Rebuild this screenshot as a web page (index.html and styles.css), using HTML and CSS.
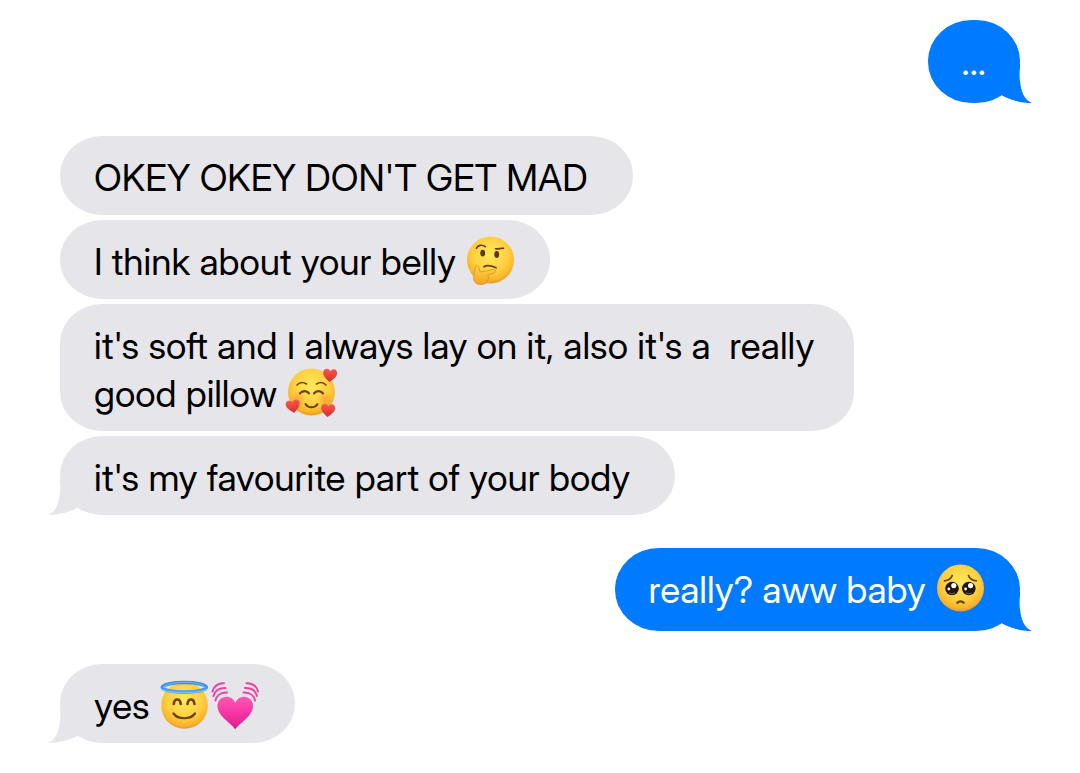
FILE: index.html
```html
<!DOCTYPE html>
<html lang="en">

<head>
    <meta charset="UTF-8">
    <meta name="viewport" content="width=device-width, initial-scale=1.0">
    <title>Messages</title>
    <link rel="stylesheet" href="styles.css">
</head>

<body>

    <!-- shared shapes -->
    <svg class="defs" aria-hidden="true">
        <defs>
            <radialGradient id="face" cx="50%" cy="38%" r="62%">
                <stop offset="0" stop-color="#ffe95e"></stop>
                <stop offset="0.6" stop-color="#fed040"></stop>
                <stop offset="0.88" stop-color="#f9b42c"></stop>
                <stop offset="1" stop-color="#e99a20"></stop>
            </radialGradient>
            <linearGradient id="hand" x1="0" y1="0" x2="0" y2="1">
                <stop offset="0" stop-color="#ffd84a"></stop>
                <stop offset="1" stop-color="#f5a11f"></stop>
            </linearGradient>
            <linearGradient id="halo" x1="0" y1="0" x2="0" y2="1">
                <stop offset="0" stop-color="#3e8be0"></stop>
                <stop offset="1" stop-color="#4aa5f4"></stop>
            </linearGradient>
            <radialGradient id="blush">
                <stop offset="0" stop-color="#f6702e" stop-opacity="0.4"></stop>
                <stop offset="1" stop-color="#f6702e" stop-opacity="0"></stop>
            </radialGradient>
            <linearGradient id="pink" x1="0" y1="0" x2="0" y2="1">
                <stop offset="0" stop-color="#ff58b4"></stop>
                <stop offset="0.5" stop-color="#f535a4"></stop>
                <stop offset="1" stop-color="#e01b8c"></stop>
            </linearGradient>
            <linearGradient id="red" x1="0" y1="0" x2="0" y2="1">
                <stop offset="0" stop-color="#f75a4d"></stop>
                <stop offset="1" stop-color="#d92b2f"></stop>
            </linearGradient>
            <path id="small-heart" d="M0 7C-3 4.500 -7 1.500 -7 -2.200C-7 -4.600 -5.400 -6 -3.500 -6C-1.800 -6 -.6 -5 0 -3.600C.6 -5 1.800 -6 3.500 -6C5.400 -6 7 -4.600 7 -2.200C7 1.500 3 4.500 0 7Z" fill="url(#red)"></path>
            <path id="tail" d="M12 1C12 8 13 12 12 18C11 28 8 37 0 40C10 40 22 37 29 33L44 20L30 1Z"></path>
        </defs>
    </svg>

    <main class="chat">
        <div class="group sent">
            <div class="bubble">...<svg class="tail" viewBox="0 0 44 40" aria-hidden="true"><use href="#tail"></use></svg></div>
        </div>

        <div class="group received">
            <div class="bubble text-only">OKEY OKEY DON'T GET MAD</div>
            <div class="bubble">I think about your belly <svg class="emoji" viewBox="0 0 51 50" role="img" aria-label="thinking face">
                    <circle cx="25.500" cy="25" r="23.500" fill="url(#face)"></circle>
                    <g fill="none" stroke="#6b3d0c" stroke-width="1.700" stroke-linecap="round">
                        <path d="M11.500 13.200C13 10.200 17 9.200 20.300 11.700"></path>
                        <path d="M30.500 13.800C33.500 14.600 35.500 12.600 38.500 13.400"></path>
                        <path d="M19 31.800C22 29.800 27 31 31 32.800"></path>
                    </g>
                    <ellipse cx="17.700" cy="18.200" rx="2.400" ry="3.400" fill="#5f350b"></ellipse>
                    <ellipse cx="31.700" cy="19.500" rx="2.400" ry="3.400" fill="#5f350b"></ellipse>
                    <path d="M10.600 31.200C12 29.800 13.800 31 14 33L14.900 36.700C17.500 37.200 20 35.900 27.500 34.600C30.500 34.100 31.500 37 28.800 38.100L22.400 40.200C24.200 41.500 24.200 43.500 22.900 44.600C22.600 48.500 18.500 50 14 49.300C9.500 48.700 8.200 45.500 8.800 41C9 38 10.200 35.500 10.100 33.500Z" fill="url(#hand)" stroke="#dc8e20" stroke-width=".8"></path>
                </svg></div>
            <div class="bubble">it's soft and I always lay on it, also it's a  really good pillow <svg class="emoji" viewBox="0 0 51 50" role="img" aria-label="smiling face with hearts">
                    <circle cx="25.500" cy="25" r="23.500" fill="url(#face)"></circle>
                    <circle cx="12" cy="32" r="8" fill="url(#blush)"></circle>
                    <circle cx="39" cy="32" r="8" fill="url(#blush)"></circle>
                    <g fill="none" stroke="#704009" stroke-linecap="round">
                        <path stroke-width="1.600" d="M11 18C13.500 15.300 17 14.800 20.500 17M30.500 17C34 14.800 37.500 15.300 40 18"></path>
                        <path stroke-width="2.200" d="M14 26.300C16 23.300 21 23.300 23 26.300M28 26.300C30 23.300 35 23.300 37 26.300"></path>
                        <path stroke-width="2" d="M19.500 37C22 41.300 29 41.300 31.500 37"></path>
                    </g>
                    <use href="#small-heart" transform="translate(44 8) rotate(5)"></use>
                    <use href="#small-heart" transform="translate(7 39) rotate(-10)"></use>
                    <use href="#small-heart" transform="translate(42 43) rotate(5)"></use>
                </svg></div>
            <div class="bubble text-only">it's my favourite part of your body<svg class="tail" viewBox="0 0 44 40" aria-hidden="true"><use href="#tail"></use></svg></div>
        </div>

        <div class="group sent">
            <div class="bubble">really? aww baby <svg class="emoji" viewBox="0 0 51 50" role="img" aria-label="pleading face">
                    <circle cx="25.500" cy="25" r="23.500" fill="url(#face)"></circle>
                    <g fill="none" stroke="#6b3d0c" stroke-width="1.800" stroke-linecap="round">
                        <path d="M9.500 17.800C13 17.500 16 15.500 17.200 12.500M33.500 12.500C34.700 15.500 37.700 17.500 41.200 17.800"></path>
                        <path stroke-width="2.200" d="M22.300 39.800C24 38 27 38 28.700 39.800"></path>
                    </g>
                    <circle cx="17" cy="25.500" r="6.800" fill="#24160f"></circle>
                    <circle cx="33.800" cy="25.500" r="6.800" fill="#24160f"></circle>
                    <g fill="#fff">
                        <circle cx="18.800" cy="22.600" r="2.600"></circle>
                        <circle cx="13.800" cy="26" r="1.400"></circle>
                        <circle cx="35.600" cy="22.600" r="2.600"></circle>
                        <circle cx="30.600" cy="26" r="1.400"></circle>
                    </g>
                    <path d="M14.500 30C16 31 18 31 19.500 30M31.300 30C32.800 31 34.800 31 36.300 30" fill="none" stroke="#7d655c" stroke-width="1" stroke-linecap="round"></path>
                </svg><svg class="tail" viewBox="0 0 44 40" aria-hidden="true"><use href="#tail"></use></svg></div>
        </div>

        <div class="group received">
            <div class="bubble">yes <svg class="emoji" viewBox="0 0 51 50" role="img" aria-label="smiling face with halo">
                    <circle cx="25.500" cy="26.500" r="23.300" fill="url(#face)"></circle>
                    <ellipse cx="25.300" cy="8.300" rx="22" ry="4.800" fill="none" stroke="url(#halo)" stroke-width="3.600"></ellipse>
                    <path d="M4.500 8.800C5 5.200 16 3.300 25.300 3.300S45.500 5.200 46 8.800" fill="none" stroke="#7cbcf6" stroke-width=".9"></path>
                    <path d="M3.500 10.500C8 14.500 42 14.500 47 10.500" fill="none" stroke="#8accfb" stroke-width=".9"></path>
                    <g fill="none" stroke="#704009" stroke-linecap="round">
                        <path stroke-width="2.600" d="M14.800 25C15.300 19 21.200 19 21.700 25M28.500 25C29 19 34.900 19 35.400 25"></path>
                        <path stroke-width="2.200" d="M14.500 34.500C19 40.800 31.500 40.800 36 34.500"></path>
                    </g>
                </svg><svg class="emoji" viewBox="0 0 51 50" role="img" aria-label="beating heart">
                    <path d="M25.300 50.500C22 44.500 7.500 37.500 7.500 27C7.500 21.500 11.500 17.800 16.300 17.800C20.500 17.800 23.800 20 25.300 24C26.800 20 30 17.800 34.300 17.800C39 17.800 43 21.500 43 27C43 37.500 28.500 44.500 25.300 50.500Z" fill="url(#pink)"></path>
                    <g fill="none" stroke="#f0409f" stroke-width="2" stroke-linecap="round">
                        <path d="M2.500 12.500C3.500 7.500 8 4 14 4.300M3.500 17C5 11.500 9.500 8.800 15.500 9M5.500 21.500C6.500 16.500 11 13.300 17 13.600"></path>
                        <path d="M48 12.500C47 7.500 42.500 4 36.500 4.300M47 17C45.500 11.500 41 8.800 35 9M45 21.500C44 16.500 39.500 13.300 33.500 13.600"></path>
                    </g>
                </svg><svg class="tail" viewBox="0 0 44 40" aria-hidden="true"><use href="#tail"></use></svg></div>
        </div>
    </main>

</body>

</html>
```
FILE: styles.css
```css
body {
    margin: 0;
    background-color: #fff;
    color: #000;
    font-family: "Inter Display", Inter, "Liberation Sans", sans-serif;
    font-size: 37px;
    line-height: 48px;
}

.defs {
    display: block;
    width: 0;
    height: 0;
}

.chat {
    display: flex;
    flex-direction: column;
    gap: 33px;
    padding: 20px 60px;
}

.group {
    display: flex;
    flex-direction: column;
    align-items: flex-start;
    gap: 5px;
}

.sent {
    align-items: flex-end;
}

.bubble {
    position: relative;
    max-width: 794px;
    box-sizing: border-box;
    padding: 18px 34px 13px 34px;
    border-radius: 42px / 39px;
    background-color: #e5e5ea;
    white-space: pre-wrap;
}

.text-only {
    padding-right: 45px;
}

.sent .bubble {
    padding: 18px 34px 17px 34px;
    border-radius: 44px / 41px;
    background-color: #007aff;
    color: #fff;
}

/* little hook at the bottom corner of the last bubble in a group */
.tail {
    position: absolute;
    left: -12px;
    bottom: 0;
    width: 44px;
    height: 40px;
    fill: #e5e5ea;
}

.sent .tail {
    left: auto;
    right: -12px;
    fill: #007aff;
    transform: scaleX(-1);
}

.emoji {
    width: 51px;
    height: 50px;
    margin: -4px 0;
    vertical-align: -6px;
    overflow: visible;
}
```
